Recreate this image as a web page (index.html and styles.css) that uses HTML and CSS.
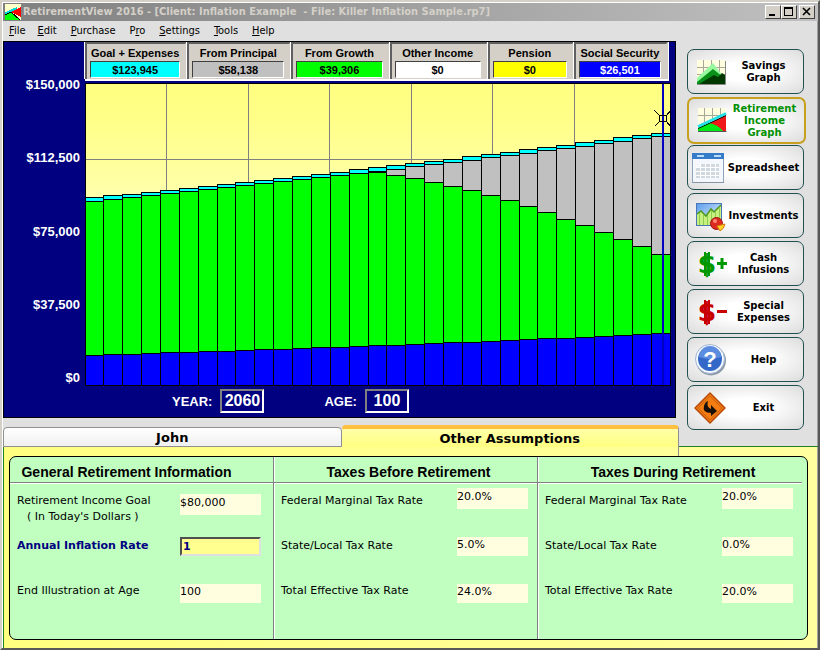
FILE: index.html
```html
<!DOCTYPE html>
<html lang="en">
<head>
    <meta charset="UTF-8">
    <meta name="viewport" content="width=device-width, initial-scale=1.0">
    <title>RetirementView 2016</title>
    <link rel="stylesheet" href="styles.css">
</head>
<body>
    <div class="window">
        <header class="titlebar">
            <svg class="app-icon" viewBox="0 0 16 16" shape-rendering="crispEdges">
                <rect width="16" height="16" fill="#ffffc8"/>
                <path d="M6 8 L16 3 V13Z" fill="#f00"/>
                <path d="M0 16 V11 L6 8 L15 16Z" fill="#0f0"/>
                <path d="M0 9.500 L12 4" stroke="#00d8d8" stroke-width="2"/>
                <path d="M0 11 L6 8 L15 16" stroke="#000" fill="none"/>
            </svg>
            <h1 class="title">RetirementView 2016 - [Client: Inflation Example &nbsp;- File: Killer Inflation Sample.rp7]</h1>
            <div class="window-buttons">
                <button type="button" class="window-button" aria-label="Minimize">
                    <svg viewBox="0 0 14 12" shape-rendering="crispEdges"><path d="M3 8h6v2h-6z"/></svg>
                </button>
                <button type="button" class="window-button" aria-label="Maximize">
                    <svg viewBox="0 0 14 12" shape-rendering="crispEdges"><path d="M2 1h9v9h-9zM3 3v6h7v-6z" fill-rule="evenodd"/></svg>
                </button>
                <button type="button" class="window-button close" aria-label="Close">
                    <svg viewBox="0 0 14 12"><path d="M3 2l7 7M10 2l-7 7" stroke="#000" stroke-width="1.6"/></svg>
                </button>
            </div>
        </header>

        <nav class="menubar">
            <button type="button"><u>F</u>ile</button>
            <button type="button"><u>E</u>dit</button>
            <button type="button"><u>P</u>urchase</button>
            <button type="button">P<u>r</u>o</button>
            <button type="button"><u>S</u>ettings</button>
            <button type="button"><u>T</u>ools</button>
            <button type="button"><u>H</u>elp</button>
        </nav>

        <main class="workspace">
            <div class="left">
                <section class="chart-panel">
                    <div class="axis">
                        <span>$150,000</span>
                        <span>$112,500</span>
                        <span>$75,000</span>
                        <span>$37,500</span>
                        <span>$0</span>
                    </div>
                    <div class="chart">
                        <div class="legend">
                            <div class="legend-item">Goal + Expenses<output class="goal">$123,945</output></div>
                            <div class="legend-item">From Principal<output class="principal">$58,138</output></div>
                            <div class="legend-item">From Growth<output class="growth">$39,306</output></div>
                            <div class="legend-item">Other Income<output class="other">$0</output></div>
                            <div class="legend-item">Pension<output class="pension">$0</output></div>
                            <div class="legend-item">Social Security<output class="social">$26,501</output></div>
                        </div>
                        <svg class="plot" id="plot" viewBox="0 0 586 303" preserveAspectRatio="none" shape-rendering="crispEdges">
                            <defs>
                                <linearGradient id="sky" x1="0" y1="0" x2="0" y2="1">
                                    <stop offset="0" stop-color="#ffff80"/>
                                    <stop offset="0.12" stop-color="#ffff88"/>
                                    <stop offset="0.4" stop-color="#ffffb0"/>
                                </linearGradient>
                            </defs>
                            <rect width="586" height="303" fill="url(#sky)"/>
                            <path class="grid-lines" d="M81.500 1V303M163.500 1V303M244.500 1V303M326.500 1V303M407.500 1V303M489.500 1V303M0 76.500H586"/>
                            <g id="bars"></g>
                            <path d="M0 302.500H586M.5 0V303M585.500 0V303M0 .5H586" stroke="#000"/>
                            <path d="M578 1V302" stroke="#0000c0" stroke-width="2"/>
                            <rect x="574.500" y="32.500" width="7" height="6" fill="none" stroke="#000"/>
                            <path d="M569.500 27.500l5 5M585.500 27.500l-4 5M569.500 43.500l5-5M585.500 43.500l-4-5" stroke="#000"/>
                        </svg>
                        <div class="readouts">
                            <label>YEAR: <output>2060</output></label>
                            <label>AGE: <output>100</output></label>
                        </div>
                    </div>
                </section>
                <div class="tabs" role="tablist">
                    <button type="button" class="tab" role="tab">John</button>
                    <button type="button" class="tab active" role="tab" aria-selected="true">Other Assumptions</button>
                </div>
            </div>

            <aside class="sidebar">
                <button type="button" class="nav-button">
                    <svg viewBox="0 0 36 36">
                        <rect x="6" y="6" width="28" height="24" fill="#ffffe0"/>
                        <path d="M6 13.500H34M6 20.500H34M12.500 6V30M20.500 6V30M28.500 6V30" stroke="#a8a898" fill="none"/>
                        <path d="M6 30V24L22 9L32 22V30Z" fill="#98f8a0"/>
                        <path d="M6 30V28L22 15L32 23V30Z" fill="#089018"/>
                        <path d="M8 30L23 21L27 23L31 19L34 21V30Z" fill="#003800"/>
                        <path d="M6 30.500H34.500V7" stroke="#888" fill="none"/>
                    </svg>
                    <span>Savings Graph</span>
                </button>
                <button type="button" class="nav-button selected">
                    <svg viewBox="0 0 36 36">
                        <rect x="6" y="5" width="28" height="23" fill="#ffffe0"/>
                        <path d="M6 12.500H34M12.500 5V28M20.500 5V28M28.500 5V28" stroke="#a8a898" fill="none"/>
                        <path d="M15 21L34 12V28H31Z" fill="#f01818"/>
                        <path d="M6 28V25L17 20Q25 21 31 28Z" fill="#00e818"/>
                        <path d="M6 25.500L34 12.500" stroke="#000"/>
                        <path d="M6 23.500L34 10.500" stroke="#20e0e8" stroke-width="2.500"/>
                        <path d="M6 28.500H34.500" stroke="#555"/>
                    </svg>
                    <span>Retirement Income Graph</span>
                </button>
                <button type="button" class="nav-button">
                    <svg viewBox="0 0 36 36">
                        <rect x="1.500" y="3.500" width="31" height="29" fill="#f4f7fc" stroke="#8fa4bd"/>
                        <rect x="1" y="3" width="32" height="6" fill="#347cc7"/>
                        <path d="M6 6H13M23 6H30" stroke="#b9d9f7" stroke-width="2"/>
                        <path d="M9 14H28V28H5V17H9Z" fill="#d0d8e0"/>
                        <path d="M5 17.500H28M5 21.500H28M5 25.500H28M9.500 13V29M14.500 13V29M19.500 13V29M24.500 13V29" stroke="#fff"/>
                        <path d="M2 32.500H33" stroke="#8794a3"/>
                    </svg>
                    <span>Spreadsheet</span>
                </button>
                <button type="button" class="nav-button">
                    <svg viewBox="0 0 36 36">
                        <defs>
                            <linearGradient id="blue" x1="0" y1="0" x2="1" y2="1">
                                <stop offset="0" stop-color="#5c9cec"/>
                                <stop offset="1" stop-color="#f0f8ff"/>
                            </linearGradient>
                        </defs>
                        <rect x="5.500" y="5.500" width="25" height="22" fill="url(#blue)" stroke="#4875b8"/>
                        <path d="M6 27V16L10 13L15 18L20 11L23 14L30 7V27Z" fill="#c8f080"/>
                        <path d="M8.500 15V27M12.500 17V27M16.500 17V27M20.500 12V27M24.500 14V27M28.500 10V27" stroke="#90cc50"/>
                        <path d="M6 16L10 13L15 18L20 11L23 14L30 7" stroke="#4e9a20" fill="none" stroke-width="1.500"/>
                        <circle cx="25.500" cy="25.500" r="6" fill="#dc2c20" stroke="#a01010"/>
                        <circle cx="24" cy="23" r="2" fill="#ff8878"/>
                        <path d="M26 28L34 26Q33 31 29 33Z" fill="#ffd028" stroke="#d87808"/>
                    </svg>
                    <span>Investments</span>
                </button>
                <button type="button" class="nav-button">
                    <svg viewBox="0 0 36 36">
                        <text class="dollar" x="16" y="27" text-anchor="middle" fill="#009800">$</text>
                        <path d="M14 6V30M18 6V30" stroke="#009800" stroke-width="2"/>
                        <path d="M26 17.500H36M31 12V23" stroke="#009800" stroke-width="3"/>
                    </svg>
                    <span>Cash Infusions</span>
                </button>
                <button type="button" class="nav-button">
                    <svg viewBox="0 0 36 36">
                        <text class="dollar" x="16" y="27" text-anchor="middle" fill="#c80000">$</text>
                        <path d="M14 6V30M18 6V30" stroke="#c80000" stroke-width="2"/>
                        <path d="M26 17.500H36" stroke="#c80000" stroke-width="3"/>
                    </svg>
                    <span>Special Expenses</span>
                </button>
                <button type="button" class="nav-button">
                    <svg viewBox="0 0 36 36">
                        <circle cx="20" cy="18.500" r="15" fill="#8c98a8"/>
                        <circle cx="19" cy="17" r="14.500" fill="#f4f8ff" stroke="#a0b4d0"/>
                        <circle cx="19" cy="17" r="12" fill="#3468c8"/>
                        <path d="M8 15A11 11 0 0 1 30 15Q19 19 8 15Z" fill="#5c8ce0"/>
                        <text class="question" x="19" y="25" text-anchor="middle">?</text>
                    </svg>
                    <span>Help</span>
                </button>
                <button type="button" class="nav-button">
                    <svg viewBox="0 0 36 36">
                        <path d="M19 3L34 18L19 33L4 18Z" fill="#f47c10" stroke="#b84c08" stroke-width="1.500" stroke-linejoin="round"/>
                        <path d="M19 6L31 18L19 30L7 18Z" fill="none" stroke="#c86010"/>
                        <path d="M17 11Q15 17 20 19V15L26 21L20 26V23Q11 23 13 16Q14 12 17 11Z" fill="#181008"/>
                    </svg>
                    <span>Exit</span>
                </button>
            </aside>
        </main>

        <section class="pane">
            <form class="assumptions">
                <fieldset class="group general">
                    <h2>General Retirement Information</h2>
                    <div class="field first">
                        <label for="goal">Retirement Income Goal<br><span class="note">( In Today's Dollars )</span></label>
                        <input id="goal" type="text" value="$80,000">
                    </div>
                    <div class="field second editing">
                        <label for="inflation">Annual Inflation Rate</label>
                        <input id="inflation" type="text" value="1">
                    </div>
                    <div class="field third">
                        <label for="end-age">End Illustration at Age</label>
                        <input id="end-age" type="text" value="100">
                    </div>
                </fieldset>
                <fieldset class="group">
                    <h2>Taxes Before Retirement</h2>
                    <div class="field first">
                        <label for="before-federal">Federal Marginal Tax Rate</label>
                        <input id="before-federal" type="text" value="20.0%">
                    </div>
                    <div class="field second">
                        <label for="before-state">State/Local Tax Rate</label>
                        <input id="before-state" type="text" value="5.0%">
                    </div>
                    <div class="field third">
                        <label for="before-total">Total Effective Tax Rate</label>
                        <input id="before-total" type="text" value="24.0%">
                    </div>
                </fieldset>
                <fieldset class="group">
                    <h2>Taxes During Retirement</h2>
                    <div class="field first">
                        <label for="during-federal">Federal Marginal Tax Rate</label>
                        <input id="during-federal" type="text" value="20.0%">
                    </div>
                    <div class="field second">
                        <label for="during-state">State/Local Tax Rate</label>
                        <input id="during-state" type="text" value="0.0%">
                    </div>
                    <div class="field third">
                        <label for="during-total">Total Effective Tax Rate</label>
                        <input id="during-total" type="text" value="20.0%">
                    </div>
                </fieldset>
            </form>
        </section>
    </div>

    <script>
        // Height of each layer above the baseline, one entry per year
        const expenses = [188, 190, 191, 193, 195, 197, 199, 201, 203, 205, 207, 209, 211, 213, 216, 218, 220, 222, 224, 226, 229, 231, 233, 236, 238, 240, 243, 245, 248, 250, 252];
        const principal = [184, 186, 188, 190, 192, 194, 196, 198, 200, 202, 204, 206, 208, 210, 212, 214, 216, 219, 221, 223, 225, 228, 230, 232, 235, 237, 239, 242, 244, 247, 249];
        const growth = [184, 186, 188, 190, 192, 194, 196, 198, 200, 202, 204, 206, 208, 210, 212, 213, 210, 207, 203, 199, 195, 190, 185, 179, 173, 166, 160, 153, 146, 139, 131];
        const social = [30, 31, 31, 32, 33, 33, 34, 34, 35, 36, 36, 37, 38, 38, 39, 40, 40, 41, 42, 43, 43, 44, 45, 46, 47, 47, 48, 49, 50, 51, 52];

        const layers = [
            { values: expenses, color: '#00ffff' },
            { values: principal, color: '#c0c0c0' },
            { values: growth, color: '#00ff00' },
            { values: social, color: '#0000ff' }
        ];
        const baseline = 302.5;
        const plotWidth = 585;
        const bars = document.getElementById('bars');

        function drawBar(index, height, color) {
            const count = expenses.length;
            const left = Math.floor(index * plotWidth / count);
            const right = Math.floor((index + 1) * plotWidth / count);
            const rect = document.createElementNS('http://www.w3.org/2000/svg', 'rect');
            rect.setAttribute('x', left + 0.5);
            rect.setAttribute('y', baseline - height);
            rect.setAttribute('width', right - left);
            rect.setAttribute('height', height);
            rect.setAttribute('fill', color);
            rect.setAttribute('stroke', '#000');
            bars.appendChild(rect);
        }

        layers.forEach(layer => {
            layer.values.forEach((height, index) => drawBar(index, height, layer.color));
        });
    </script>
</body>
</html>
```
FILE: styles.css
```css
* {
    margin: 0;
    padding: 0;
    box-sizing: border-box;
}

body {
    font-family: "DejaVu Sans", Verdana, sans-serif;
    font-size: 11px;
    color: #000;
}

button,
input {
    font: inherit;
    color: inherit;
    border: none;
    background: none;
}

/* Window frame */
.window {
    display: flex;
    flex-direction: column;
    min-height: 100vh;
    padding: 1px 0 0 1px;
    background: #e0e0e0;
    border: 2px solid;
    border-color: #d4d0c8 #585858 #585858 #d4d0c8;
    box-shadow: inset 1px 1px #fff, inset -1px -1px #a0a0a0;
}

.titlebar {
    display: flex;
    align-items: center;
    height: 18px;
    padding: 0 3px 0 2px;
    background: linear-gradient(90deg, #808080, #c0c0c0);
}

.app-icon {
    width: 16px;
    height: 16px;
}

.title {
    flex: 1;
    padding-left: 2px;
    font-family: "DejaVu Sans Condensed", "DejaVu Sans", Tahoma, sans-serif;
    font-size: 11px;
    font-weight: bold;
    line-height: 18px;
    color: #d4d0c8;
    white-space: nowrap;
}

.window-buttons {
    display: flex;
}

.window-button {
    width: 16px;
    height: 14px;
    background: #d4d0c8;
    border: 1px solid;
    border-color: #fff #404040 #404040 #fff;
}

.window-button.close {
    margin-left: 2px;
}

.window-button svg {
    display: block;
    width: 14px;
    height: 12px;
}

.menubar {
    display: flex;
    height: 20px;
}

.menubar button {
    padding: 0 6px;
    font-family: "DejaVu Sans Condensed", "DejaVu Sans", Tahoma, sans-serif;
    font-size: 11px;
    line-height: 20px;
}

.menubar button:nth-child(n+3) {
    padding-left: 8px;
}

/* Chart */
.workspace {
    display: grid;
    grid-template-columns: 1fr 142px;
}

.left {
    display: flex;
    flex-direction: column;
    justify-content: space-between;
    min-width: 0;
}

.chart-panel {
    display: flex;
    background: #000080;
    border: 1px solid #000;
    color: #fff;
    font-family: "Liberation Sans", Arial, sans-serif;
    font-weight: bold;
}

.axis {
    display: flex;
    flex-direction: column;
    justify-content: space-between;
    width: 81px;
    padding: 35px 5px 31px 0;
    font-size: 13px;
    line-height: 16px;
    text-align: right;
}

.chart {
    flex: 1;
    min-width: 0;
    padding-right: 4px;
}

.legend {
    display: grid;
    grid-template-columns:
        minmax(0, 102fr) minmax(0, 104fr) minmax(0, 98fr)
        minmax(0, 98fr) minmax(0, 86fr) minmax(0, 94fr);
    margin-right: 2px;
    border-right: 1px solid #fff;
    border-bottom: 2px solid #fff;
}

.legend-item {
    padding: 1px 5px 1px 3px;
    background: #d4d0c8;
    border: 2px solid;
    border-color: #606060 #d4d0c8 #d4d0c8 #606060;
    border-bottom-width: 0;
    box-shadow: -1px 0 #fff;
    color: #000;
    font-size: 11px;
    line-height: 16px;
    text-align: center;
    white-space: nowrap;
}

.legend output {
    display: block;
    height: 17px;
    border: 1px solid;
    border-color: #404040 #fff #fff #404040;
    line-height: 16px;
}

.goal {
    background: #00ffff;
}

.principal {
    background: #c0c0c0;
}

.growth {
    background: #00ff00;
}

.other {
    background: #fff;
}

.pension {
    background: #ffff00;
}

.social {
    background: #0000ff;
    color: #fff;
}

.plot {
    display: block;
    width: 100%;
    height: 303px;
    margin-top: 2px;
}

.grid-lines {
    stroke: #808080;
    fill: none;
}

.readouts {
    display: flex;
    gap: 60px;
    height: 31px;
    padding: 3px 0 4px 87px;
    font-size: 13px;
    line-height: 26px;
}

.readouts label {
    display: flex;
    gap: 8px;
}

.readouts output {
    width: 44px;
    height: 24px;
    border: 2px solid;
    border-color: #808080 #fff #fff #808080;
    font-size: 16px;
    line-height: 20px;
    text-align: center;
}

/* Tabs */
.tabs {
    display: flex;
    height: 22px;
    margin-right: -3px;
}

.tab {
    flex: 1;
    margin-top: 2px;
    background: linear-gradient(#fff, #f0f0f0);
    border: 1px solid #909090;
    border-radius: 4px 4px 0 0;
    font-size: 13px;
    font-weight: bold;
    line-height: 17px;
}

.tab.active {
    position: relative;
    margin-top: 0;
    background: linear-gradient(#ffffa8, #ffff80);
    border-top: 4px solid #ffc040;
    border-bottom: none;
    border-left: none;
}

/* side edge carries on down to the panel */
.tab.active::after {
    content: "";
    position: absolute;
    top: 100%;
    right: -1px;
    width: 1px;
    height: 9px;
    background: #909090;
}

/* Sidebar */
.sidebar {
    display: flex;
    flex-direction: column;
    gap: 3px;
    padding: 8px 14px 16px 11px;
    border-bottom: 1px solid #208020;
}

.nav-button {
    display: flex;
    align-items: center;
    height: 45px;
    padding: 0 3px;
    background: radial-gradient(ellipse at center, #fff 30%, #dcdcdc 100%);
    border: 1px solid #205050;
    border-radius: 7px;
    font-size: 10px;
    font-weight: bold;
    line-height: 12px;
}

.nav-button.selected {
    height: 47px;
    margin: 0 -2px -2px 0;
    border: 2px solid #c8a020;
    color: #009000;
}

.nav-button svg {
    flex: none;
    width: 36px;
    height: 36px;
}

.nav-button span {
    flex: 1;
    min-width: 0;
    text-align: center;
}

.dollar {
    font: bold 27px "DejaVu Sans", Verdana, sans-serif;
}

.question {
    font: bold 22px "Liberation Sans", Arial, sans-serif;
    fill: #fff;
}

/* Assumptions */
.pane {
    display: flex;
    flex: 1;
    padding: 9px 9px 8px 5px;
    background: linear-gradient(90deg, #ffff80, #ffffa0);
    border-left: 1px solid #208020;
    margin-right: 1px;
}

.assumptions {
    display: grid;
    grid-template-columns: 264fr 264fr 269fr;
    flex: 1;
    background: #c0ffc0;
    border: 1px solid #000;
    border-radius: 7px;
}

.group {
    min-width: 0;
    border: none;
    border-right: 1px solid #808080;
    box-shadow: 1px 0 #fff;
}

.group:last-child {
    margin-right: 5px;
    border-right: none;
    box-shadow: none;
}

.group h2 {
    height: 26px;
    margin-bottom: 5px;
    padding-left: 6px;
    border-bottom: 1px solid #808080;
    box-shadow: 0 1px #fff;
    font-family: "Liberation Sans", Arial, sans-serif;
    font-size: 14px;
    line-height: 30px;
    text-align: center;
}

.group.general h2 {
    padding: 0 30px 0 0;
}

.field {
    display: flex;
    justify-content: space-between;
    align-items: flex-start;
    height: 45px;
    padding: 0 9px 0 7px;
}

.field label {
    padding-top: 5px;
    line-height: 16px;
    white-space: nowrap;
}

.field input {
    width: 71px;
    height: 19px;
    padding-bottom: 5px;
    background: #ffffe0;
    line-height: 14px;
}

.general .field {
    padding-right: 12px;
}

.general .field input {
    width: 81px;
}

.note {
    padding-left: 10px;
}

.field.first input {
    height: 21px;
}

.general .first input {
    margin-top: 6px;
}

.second input {
    margin-top: 4px;
}

.third input {
    margin-top: 6px;
}

.field.editing {
    color: #000080;
    font-weight: bold;
}

.field.editing input {
    padding: 0 1px;
    background: #ffff90;
    border: 2px solid;
    border-color: #505050 #e0e0e0 #e0e0e0 #505050;
}
```
